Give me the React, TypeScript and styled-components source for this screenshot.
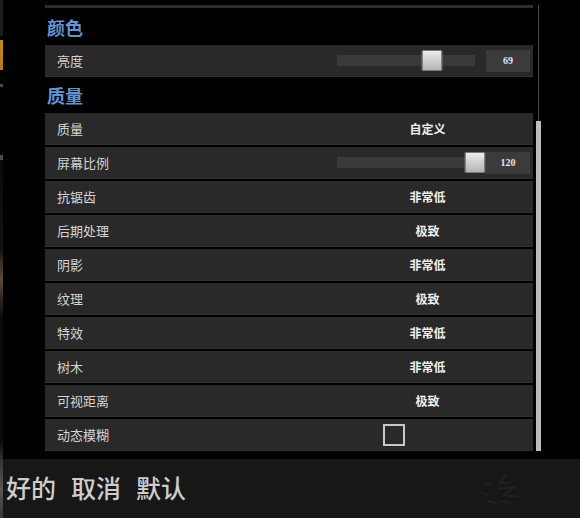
import React from "react";
import styled, { createGlobalStyle } from "styled-components";

const GlobalStyle = createGlobalStyle`
  html, body {
    margin: 0;
    padding: 0;
    background: #000;
    font-family: "Noto Sans CJK SC", "Noto Sans", sans-serif;
  }
`;

const Page = styled.div`
  width: 580px;
  height: 518px;
  display: flex;
  overflow: hidden;
  background: #000;
`;

const LeftStrip = styled.div`
  width: 3px;
  flex: none;
  background: linear-gradient(
    to bottom,
    #1c1c1c 0px,
    #1c1c1c 36px,
    #000 36px,
    #000 40px,
    #c98b0a 40px,
    #b87c06 70px,
    #000 70px,
    #000 84px,
    #4a4a4a 84px,
    #4a4a4a 87px,
    #000 87px,
    #000 155px,
    #4a4a4a 155px,
    #4a4a4a 160px,
    #0a0a0a 160px,
    #111 250px,
    #3a2e24 262px,
    #5a4a3a 280px,
    #2a221c 300px,
    #080808 320px,
    #0a0a0a 440px,
    #3a3632 462px,
    #5a5550 490px,
    #3a3632 518px
  );
`;

const Content = styled.div`
  flex: 1;
  display: flex;
  flex-direction: column;
`;

const Main = styled.div`
  height: 459px;
  display: flex;
  flex: none;
`;

const Panel = styled.div`
  margin-left: 42px;
  width: 488px;
  padding-top: 5px;
  display: flex;
  flex-direction: column;
`;

const TopRule = styled.div`
  height: 3px;
  background: #2c2c2c;
`;

const SectionTitle = styled.div<{ $h: number }>`
  height: ${(p) => p.$h}px;
  display: flex;
  align-items: center;
  padding-left: 2px;
  color: #6594d0;
  font-size: 18px;
  font-weight: 700;
`;

const Rows = styled.div`
  display: flex;
  flex-direction: column;
  gap: 2px;
`;

const Row = styled.div`
  height: 32px;
  box-sizing: border-box;
  background: #292929;
  border-bottom: 1px solid #2f2f2f;
  display: grid;
  grid-template-columns: 1fr 210px;
  align-items: center;
`;

const Label = styled.div`
  padding-left: 12px;
  font-size: 13px;
  color: #d4d4d4;
`;

const ValueCell = styled.div<{ $align?: "center" | "start" }>`
  height: 100%;
  display: flex;
  align-items: center;
  justify-content: ${(p) => (p.$align === "start" ? "flex-start" : "center")};
  margin-right: 1px;
`;

const ValueText = styled.span`
  font-size: 12px;
  font-weight: 700;
  color: #f0f0f0;
`;

const SliderWrap = styled.div`
  display: flex;
  align-items: center;
  width: 100%;
  padding-left: 14px;
  box-sizing: border-box;
`;

const Track = styled.div`
  position: relative;
  width: 138px;
  height: 11px;
  background: #3a3a3a;
  margin-right: 11px;
`;

const Thumb = styled.div`
  position: absolute;
  top: -5px;
  width: 19px;
  height: 19px;
  background: linear-gradient(to bottom, #ececec, #b4b4b4);
  border: 1px solid #7a7a7a;
  border-radius: 1px;
  transform: translateX(-50%);
`;

const NumberBox = styled.div`
  width: 44px;
  height: 22px;
  background: #3b3b3b;
  display: flex;
  align-items: center;
  justify-content: center;
  font-family: "Liberation Serif", "DejaVu Serif", serif;
  font-weight: 700;
  font-size: 10px;
  color: #e6e6e6;
`;

const CheckBox = styled.div`
  width: 22px;
  height: 22px;
  box-sizing: border-box;
  border: 2px solid #c8c8c8;
  margin-left: 60px;
`;

const ScrollCol = styled.div`
  margin-left: 3px;
  width: 5px;
  padding-top: 5px;
  display: flex;
  flex-direction: column;
  align-items: center;
`;

const ScrollTrack = styled.div`
  width: 1px;
  height: 116px;
  background: #4a4a4a;
`;

const ScrollThumb = styled.div`
  width: 5px;
  height: 330px;
  background: #bdbdbd;
`;

const BottomBar = styled.div`
  flex: 1;
  background: #171717;
  display: flex;
  align-items: center;
  padding-left: 3px;
  gap: 15px;
  position: relative;
`;

const BarButton = styled.span`
  font-size: 25px;
  font-weight: 500;
  color: #cdcdcd;
  line-height: 1;
  margin-top: -2px;
`;

const Watermark = styled.svg`
  position: absolute;
  left: 477px;
  top: 12px;
`;

type Setting =
  | { kind: "text"; label: string; value: string }
  | { kind: "slider"; label: string; value: number; min: number; max: number }
  | { kind: "check"; label: string; checked: boolean };

const colorSettings: Setting[] = [
  { kind: "slider", label: "亮度", value: 69, min: 0, max: 100 },
];

const qualitySettings: Setting[] = [
  { kind: "text", label: "质量", value: "自定义" },
  { kind: "slider", label: "屏幕比例", value: 120, min: 50, max: 120 },
  { kind: "text", label: "抗锯齿", value: "非常低" },
  { kind: "text", label: "后期处理", value: "极致" },
  { kind: "text", label: "阴影", value: "非常低" },
  { kind: "text", label: "纹理", value: "极致" },
  { kind: "text", label: "特效", value: "非常低" },
  { kind: "text", label: "树木", value: "非常低" },
  { kind: "text", label: "可视距离", value: "极致" },
  { kind: "check", label: "动态模糊", checked: false },
];

function SettingRow({ s }: { s: Setting }) {
  return (
    <Row>
      <Label>{s.label}</Label>
      {s.kind === "text" && (
        <ValueCell>
          <ValueText>{s.value}</ValueText>
        </ValueCell>
      )}
      {s.kind === "slider" && (
        <ValueCell>
          <SliderWrap>
            <Track>
              <Thumb
                style={{
                  left: `${((s.value - s.min) / (s.max - s.min)) * 100}%`,
                }}
              />
            </Track>
            <NumberBox>{s.value}</NumberBox>
          </SliderWrap>
        </ValueCell>
      )}
      {s.kind === "check" && (
        <ValueCell $align="start">
          <CheckBox />
        </ValueCell>
      )}
    </Row>
  );
}

export default function App() {
  return (
    <>
      <GlobalStyle />
      <Page>
        <LeftStrip />
        <Content>
          <Main>
            <Panel>
              <TopRule />
              <SectionTitle $h={37}>颜色</SectionTitle>
              <Rows>
                {colorSettings.map((s) => (
                  <SettingRow key={s.label} s={s} />
                ))}
              </Rows>
              <SectionTitle $h={36}>质量</SectionTitle>
              <Rows>
                {qualitySettings.map((s) => (
                  <SettingRow key={s.label} s={s} />
                ))}
              </Rows>
            </Panel>
            <ScrollCol>
              <ScrollTrack />
              <ScrollThumb />
            </ScrollCol>
          </Main>
          <BottomBar>
            <BarButton>好的</BarButton>
            <BarButton>取消</BarButton>
            <BarButton>默认</BarButton>
            <Watermark width="48" height="36" viewBox="0 0 48 36">
              <g fill="none" stroke="#212121" strokeWidth="2" strokeLinecap="round">
                <path d="M26 4 L20 12 L30 12" />
                <path d="M18 18 L34 16 L24 24 L38 26" />
                <path d="M4 12 L10 14 M2 22 L8 24" />
                <path d="M8 30 L16 32 M20 30 L30 32" />
              </g>
            </Watermark>
          </BottomBar>
        </Content>
      </Page>
    </>
  );
}
